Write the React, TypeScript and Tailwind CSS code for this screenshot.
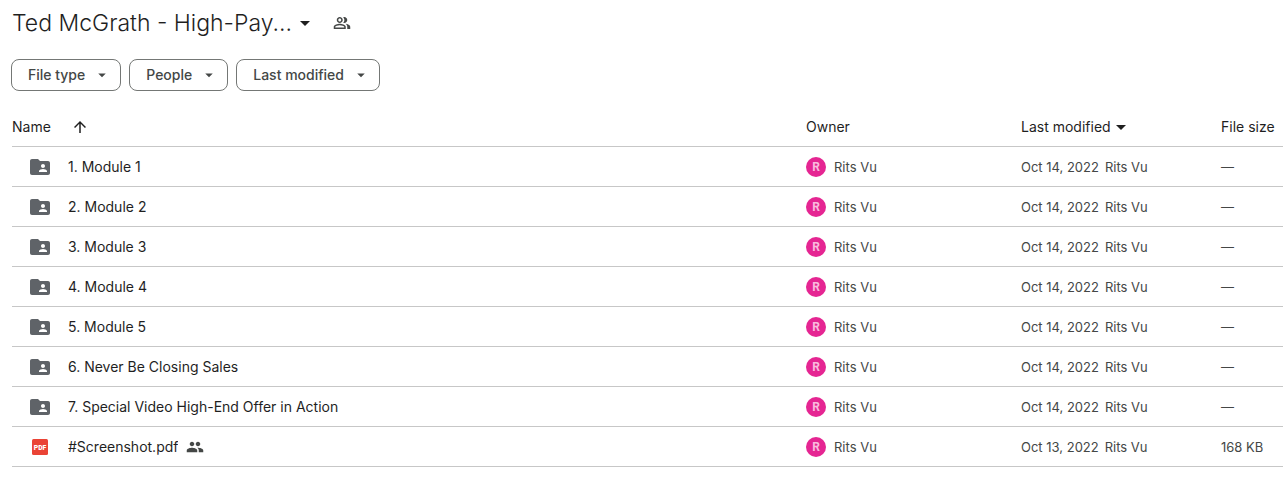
import {
    MdArrowDropDown,
    MdArrowUpward,
    MdFolderShared,
    MdOutlinePeopleAlt,
    MdPeople,
} from 'react-icons/md';

type FileItem = {
    name: string;
    type: 'folder' | 'pdf';
    date: string;
    size: string;
};

const filters = ['File type', 'People', 'Last modified'];

const files: FileItem[] = [
    { name: '1. Module 1', type: 'folder', date: 'Oct 14, 2022', size: '—' },
    { name: '2. Module 2', type: 'folder', date: 'Oct 14, 2022', size: '—' },
    { name: '3. Module 3', type: 'folder', date: 'Oct 14, 2022', size: '—' },
    { name: '4. Module 4', type: 'folder', date: 'Oct 14, 2022', size: '—' },
    { name: '5. Module 5', type: 'folder', date: 'Oct 14, 2022', size: '—' },
    { name: '6. Never Be Closing Sales', type: 'folder', date: 'Oct 14, 2022', size: '—' },
    { name: '7. Special Video High-End Offer in Action', type: 'folder', date: 'Oct 14, 2022', size: '—' },
    { name: '#Screenshot.pdf', type: 'pdf', date: 'Oct 13, 2022', size: '168 KB' },
];

function PdfIcon() {
    return (
        <svg viewBox="0 0 16 16" className="size-4" aria-hidden="true">
            <rect width="16" height="16" rx="1.5" fill="#ea4335" />
            <text
                x="8"
                y="10.5"
                textAnchor="middle"
                fontSize="6.8"
                fontWeight="900"
                fontFamily="Roboto, sans-serif"
                fill="#fff"
            >
                PDF
            </text>
        </svg>
    );
}

function FileRow({ file }: { file: FileItem }) {
    return (
        <tr className="h-10 text-[13px] leading-5 *:border-b *:border-[#c7c7c7] *:pt-px">
            <td>
                <div className="flex items-center text-sm">
                    <span className="ml-4 mr-4 flex w-6 justify-center text-[#5f6368]">
                        {file.type === 'folder' ? <MdFolderShared className="size-6" /> : <PdfIcon />}
                    </span>
                    <span className="truncate text-[#1f1f1f]">{file.name}</span>
                    {file.type === 'pdf' && <MdPeople className="ml-2 size-[18px] shrink-0 text-[#444746]" />}
                </div>
            </td>
            <td>
                <div className="flex items-center gap-2">
                    <span className="flex size-5 items-center justify-center rounded-full bg-[#e52592] font-[Roboto] text-xs font-bold text-[#f8bbdd]">
                        R
                    </span>
                    <span>Rits Vu</span>
                </div>
            </td>
            <td>
                <div className="flex gap-1.5 whitespace-nowrap">
                    <span>{file.date}</span>
                    <span>Rits Vu</span>
                </div>
            </td>
            <td className="whitespace-nowrap">{file.size}</td>
        </tr>
    );
}

export default function App() {
    return (
        <main className="min-h-screen bg-white pl-3 font-[Inter,sans-serif] text-sm text-[#444746]">
            <header className="flex h-[46px] items-center">
                <button type="button" className="flex items-center gap-px text-[#1f1f1f]">
                    <h1 className="text-[23px] font-light">Ted McGrath - High-Pay...</h1>
                    <MdArrowDropDown className="size-6" />
                </button>
                <button type="button" aria-label="Shared" className="ml-4">
                    <MdOutlinePeopleAlt className="size-[18px]" />
                </button>
            </header>

            <div className="-ml-px mt-[13px] flex gap-2">
                {filters.map((label) => (
                    <button
                        key={label}
                        type="button"
                        aria-haspopup="menu"
                        className="flex h-8 items-center gap-2 rounded-lg border border-[#747775] pl-4 pr-[9px] font-medium"
                    >
                        {label}
                        <MdArrowDropDown className="size-[18px]" />
                    </button>
                ))}
            </div>

            <table className="mt-4 w-full table-fixed border-separate border-spacing-0 text-left">
                <colgroup>
                    <col />
                    <col className="w-[215px]" />
                    <col className="w-[200px]" />
                    <col className="w-[62px]" />
                </colgroup>
                <thead>
                    <tr className="h-10 text-[#1f1f1f] *:border-b *:border-[#c7c7c7] *:pt-px *:font-normal">
                        <th>
                            <button type="button" className="flex items-center gap-5">
                                Name
                                <MdArrowUpward className="size-[18px]" />
                            </button>
                        </th>
                        <th>Owner</th>
                        <th>
                            <button type="button" className="flex items-center">
                                Last modified
                                <MdArrowDropDown className="-ml-0.5 size-6" />
                            </button>
                        </th>
                        <th className="whitespace-nowrap">File size</th>
                    </tr>
                </thead>
                <tbody>
                    {files.map((file) => (
                        <FileRow key={file.name} file={file} />
                    ))}
                </tbody>
            </table>
        </main>
    );
}
